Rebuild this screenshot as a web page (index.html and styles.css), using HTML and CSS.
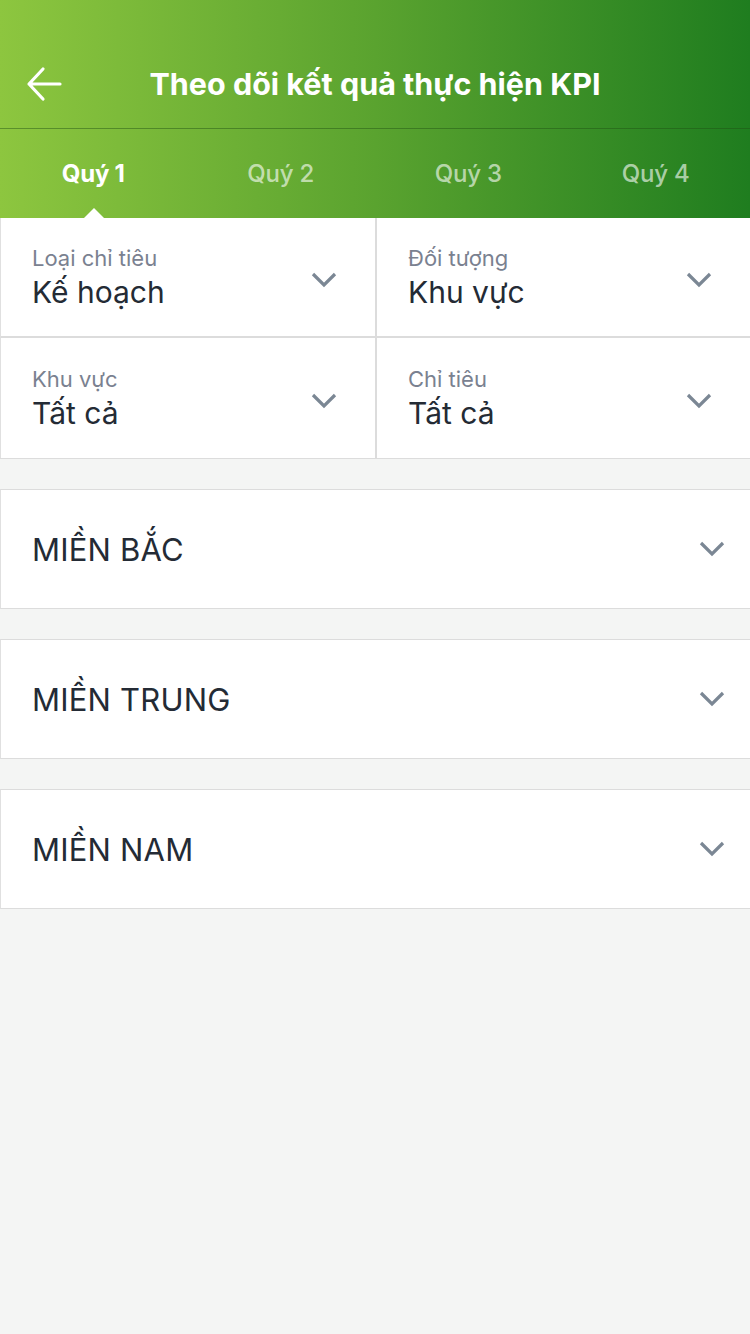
FILE: index.html
```html
<!DOCTYPE html>
<html lang="vi">
<head>
<meta charset="utf-8">
<link rel="stylesheet" href="styles.css">
</head>
<body>
<div class="app">
  <header class="hero">
    <div class="topbar">
      <button class="back" aria-label="Quay lại">
        <svg width="36" height="36" viewBox="0 0 36 36"><path d="M34 18H3M17 3L3 18l14 15" fill="none" stroke="#fff" stroke-width="3.2" stroke-linecap="round" stroke-linejoin="round"/></svg>
      </button>
      <h1 class="title">Theo dõi kết quả thực hiện KPI</h1>
    </div>
    <nav class="tabs">
      <div class="tab active">Quý 1</div>
      <div class="tab">Quý 2</div>
      <div class="tab">Quý 3</div>
      <div class="tab">Quý 4</div>
    </nav>
  </header>

  <section class="filters">
    <div class="filter">
      <div class="ftext"><div class="flabel">Loại chỉ tiêu</div><div class="fvalue">Kế hoạch</div></div>
      <svg class="chev" width="26" height="16" viewBox="0 0 26 16"><path d="M2 2l11 11L24 2" fill="none" stroke="#7b8794" stroke-width="3.2"/></svg>
    </div>
    <div class="filter">
      <div class="ftext"><div class="flabel">Đối tượng</div><div class="fvalue">Khu vực</div></div>
      <svg class="chev" width="26" height="16" viewBox="0 0 26 16"><path d="M2 2l11 11L24 2" fill="none" stroke="#7b8794" stroke-width="3.2"/></svg>
    </div>
    <div class="filter">
      <div class="ftext"><div class="flabel">Khu vực</div><div class="fvalue">Tất cả</div></div>
      <svg class="chev" width="26" height="16" viewBox="0 0 26 16"><path d="M2 2l11 11L24 2" fill="none" stroke="#7b8794" stroke-width="3.2"/></svg>
    </div>
    <div class="filter">
      <div class="ftext"><div class="flabel">Chỉ tiêu</div><div class="fvalue">Tất cả</div></div>
      <svg class="chev" width="26" height="16" viewBox="0 0 26 16"><path d="M2 2l11 11L24 2" fill="none" stroke="#7b8794" stroke-width="3.2"/></svg>
    </div>
  </section>

  <section class="regions">
    <div class="region"><span class="rname">MIỀN BẮC</span>
      <svg class="chev" width="26" height="16" viewBox="0 0 26 16"><path d="M2 2l11 11L24 2" fill="none" stroke="#7b8794" stroke-width="3.2"/></svg></div>
    <div class="region"><span class="rname">MIỀN TRUNG</span>
      <svg class="chev" width="26" height="16" viewBox="0 0 26 16"><path d="M2 2l11 11L24 2" fill="none" stroke="#7b8794" stroke-width="3.2"/></svg></div>
    <div class="region"><span class="rname">MIỀN NAM</span>
      <svg class="chev" width="26" height="16" viewBox="0 0 26 16"><path d="M2 2l11 11L24 2" fill="none" stroke="#7b8794" stroke-width="3.2"/></svg></div>
  </section>
</div>
</body>
</html>
```

FILE: styles.css
```css
* { box-sizing: border-box; margin: 0; padding: 0; }
html, body { width: 750px; height: 1334px; background: #f4f5f4; }
body { font-family: Inter, Roboto, "Noto Sans", sans-serif; color: #242b35; }
.app { width: 750px; min-height: 1334px; background: #f4f5f4; }

.hero {
  background: linear-gradient(90deg, #8dc63f 0%, #5aa32f 50%, #1f7d1f 100%);
  color: #fff;
}
.topbar {
  height: 129px;
  display: flex;
  align-items: center;
  position: relative;
  border-bottom: 1px solid rgba(30, 80, 20, 0.45);
  padding-top: 40px;
}
.back {
  background: none; border: 0; width: 36px; height: 36px;
  margin-left: 26px; display: flex;
}
.title {
  flex: 1;
  text-align: center;
  font-size: 30.5px;
  font-weight: 700;
  letter-spacing: 0;
  margin-right: 62px;
  line-height: 1;
}
.tabs {
  height: 89px;
  display: grid;
  grid-template-columns: repeat(4, 1fr);
  align-items: center;
}
.tab {
  text-align: center;
  font-size: 24px;
  font-weight: 500;
  color: rgba(255, 255, 255, 0.62);
  position: relative;
  height: 89px;
  line-height: 89px;
  padding-right: 1px;
  letter-spacing: -0.2px;
}
.tab.active { color: #fff; font-weight: 700; }
.tab.active::after {
  content: "";
  position: absolute;
  left: 50%; bottom: 0;
  margin-left: -10px;
  border-left: 10px solid transparent;
  border-right: 10px solid transparent;
  border-bottom: 10px solid #fff;
}

.filters {
  display: grid;
  grid-template-columns: 375px 375px;
  background: #fff;
  border-bottom: 1px solid #dcdcdc;
}
.filter {
  height: 120px;
  display: flex;
  align-items: center;
  justify-content: space-between;
  padding: 0 38px 0 31px;
  border-left: 1px solid #e0e0e0;
}
.filter:nth-child(2n) { border-left: 2px solid #dcdcdc; padding-left: 31px; }
.filter:nth-child(-n+2) { border-bottom: 2px solid #dcdcdc; }
.ftext { padding-top: 2px; }
.flabel { font-size: 22px; color: #7a8190; line-height: 28px; font-weight: 400; }
.fvalue { font-size: 30px; color: #242b35; line-height: 40px; font-weight: 400; }
.filter .chev { margin-top: 6px; }
.chev { display: block; }

.regions { padding-top: 30px; display: flex; flex-direction: column; gap: 30px; }
.region {
  height: 120px;
  background: #fff;
  border-top: 1px solid #dcdcdc;
  border-bottom: 1px solid #dcdcdc;
  border-left: 1px solid #e0e0e0;
  display: flex;
  align-items: center;
  justify-content: space-between;
  padding: 0 25px 0 31px;
}
.rname { font-size: 31px; color: #242b35; letter-spacing: 0.2px; }
```
